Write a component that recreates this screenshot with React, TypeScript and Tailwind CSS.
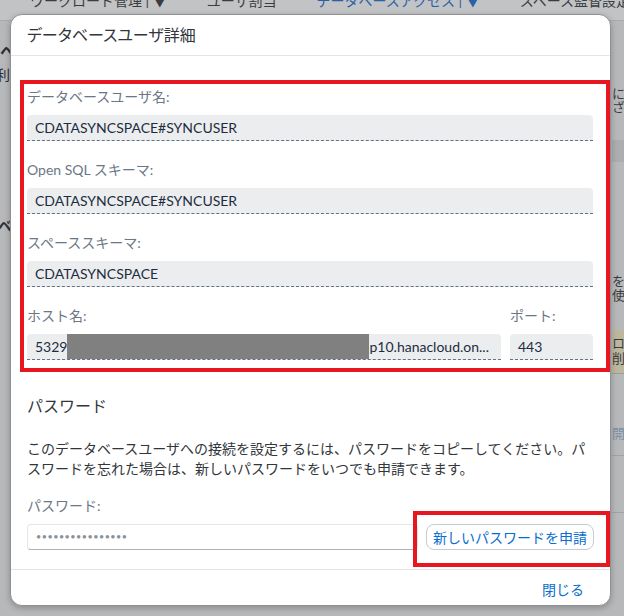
import React from 'react';

const font = { fontFamily: '"Lato", "Noto Sans CJK JP", sans-serif' };

function Field({ label, value, className = '' }: { label: string; value: React.ReactNode; className?: string }) {
  return (
    <div className={`flex flex-col ${className}`}>
      <div className="h-[20px] text-[14px] leading-[20px] text-[#6b7785]">{label}</div>
      <div className="mt-[8px] flex h-[26px] items-center overflow-hidden whitespace-nowrap rounded-t-[4px] border-b border-dashed border-[#5f7287] bg-[#ecedef] pl-[8px] text-[14px] text-[#1d2d3e]">
        {value}
      </div>
    </div>
  );
}

export default function App() {
  return (
    <div className="relative h-[616px] w-[624px] overflow-hidden bg-[#b7b8ba]" style={font}>
      {/* dimmed page behind the dialog */}
      <div className="flex h-[21px] items-start gap-[40px] overflow-hidden whitespace-nowrap border-b border-[#a9aaac] bg-[#c2c3c5] pl-[30px] text-[14px] leading-[20px] text-[#3a3d40]">
        <span className="-mt-[9px]">ワークロード管理 | ▼</span>
        <span className="-mt-[9px]">ユーザ割当</span>
        <span className="-mt-[9px] text-[#2a62a8]">データベースアクセス | ▼</span>
        <span className="-mt-[9px]">スペース監督設定</span>
      </div>
      <div className="absolute left-0 top-[40px] text-[15px] font-bold text-[#2c2f33]">へ</div>
      <div className="absolute left-[-4px] top-[64px] text-[14px] text-[#2c2f33]">利用</div>
      <div className="absolute left-[-2px] top-[215px] text-[14px] font-bold text-[#2c2f33]">ベー</div>
      <div className="absolute left-[612px] top-[86px] w-[12px] overflow-hidden text-[13px] leading-[14px] text-[#3a3d40]">
        <div className="whitespace-nowrap">にし</div>
        <div className="whitespace-nowrap">ざと</div>
      </div>
      <div className="absolute left-[612px] top-[140px] h-[22px] w-[12px] bg-[#acadaf]" />
      <div className="absolute left-[612px] top-[274px] w-[12px] overflow-hidden text-[13px] leading-[14px] text-[#3a3d40]">
        <div>を</div>
        <div>使</div>
      </div>
      <div className="absolute left-[612px] top-[330px] h-[44px] w-[12px] overflow-hidden border-b border-[#9c9da0] bg-[#bdb79e] pt-[6px] text-[13px] leading-[15px] text-[#3a3d40]">
        <div className="whitespace-nowrap">ロク</div>
        <div>削</div>
      </div>
      <div className="absolute left-[612px] top-[424px] text-[13px] text-[#7c90a8]">開</div>
      <div className="absolute left-[612px] top-[455px] h-px w-[12px] bg-[#a2a3a5]" />
      <div className="absolute left-[612px] top-[512px] h-px w-[12px] bg-[#a2a3a5]" />

      {/* dialog */}
      <div className="absolute left-[10px] top-[14px] flex h-[592px] w-[601px] flex-col rounded-[12px] border border-[#8e9093] bg-white shadow-[0_2px_6px_rgba(0,0,0,0.25)]">
        <div className="flex h-[41px] shrink-0 items-center border-b border-[#e3e4e6] pl-[16px] text-[16px] text-[#32363a] [font-feature-settings:'palt']">
          データベースユーザ詳細
        </div>

        <div className="flex flex-1 flex-col">
          <div className="mt-[24px] ml-[9px] flex flex-col gap-[19px] border-[4px] border-[#e8161f] pb-[8px] pl-[3px] pr-[13px] pt-[3px]">
            <Field label="データベースユーザ名:" value="CDATASYNCSPACE#SYNCUSER" />
            <Field label="Open SQL スキーマ:" value="CDATASYNCSPACE#SYNCUSER" />
            <Field label="スペーススキーマ:" value="CDATASYNCSPACE" />
            <div className="flex gap-[9px]">
              <Field
                className="flex-1"
                label="ホスト名:"
                value={
                  <>
                    <span>5329</span>
                    <span className="inline-block h-[26px] w-[302px] shrink-0 bg-[#808080]" />
                    <span>p10.hanacloud.on...</span>
                  </>
                }
              />
              <Field className="w-[83px]" label="ポート:" value="443" />
            </div>
          </div>

          <div className="px-[16px]">
            <div className="mt-[22px] h-[24px] text-[16px] leading-[24px] text-[#32363a]">パスワード</div>
            <p className="mt-[21px] w-[566px] text-[14px] leading-[20px] text-[#32363a]">
              このデータベースユーザへの接続を設定するには、パスワードをコピーしてください。パスワードを忘れた場合は、新しいパスワードをいつでも申請できます。
            </p>
            <div className="mt-[17px] h-[20px] text-[14px] leading-[20px] text-[#6b7785]">パスワード:</div>
            <div className="relative mt-[8px] flex items-center gap-[8px] pb-[19px]">
              <div className="flex h-[26px] flex-1 items-center rounded-[4px] border border-[#e4e6e8] border-b-[#aab2bb] pl-[8px] text-[9px] tracking-[0.5px] text-[#8a9199]">
                ••••••••••••••••
              </div>
              <button className="relative h-[26px] w-[168px] shrink-0 rounded-[8px] border border-[#c4cbd2] bg-white text-[14px] text-[#0a6ed1]">
                新しいパスワードを申請
                <span className="pointer-events-none absolute -bottom-[18px] -left-[14px] -right-[17px] -top-[14px] border-[4px] border-[#e8161f]" />
              </button>
            </div>
          </div>
        </div>

        <div className="flex h-[39px] shrink-0 items-center justify-end border-t border-[#e3e4e6] pr-[26px] text-[14px] text-[#0a6ed1]">
          閉じる
        </div>
      </div>
    </div>
  );
}
